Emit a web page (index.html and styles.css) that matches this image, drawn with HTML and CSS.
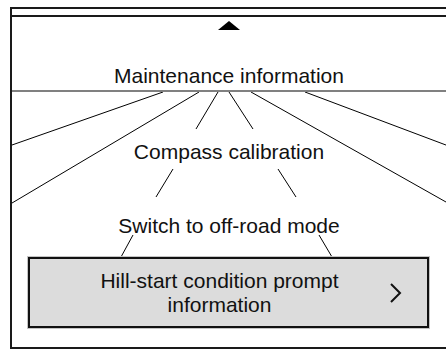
FILE: index.html
```html
<!DOCTYPE html>
<html lang="en">
<head>
<meta charset="utf-8">
<title>Menu</title>
<link rel="stylesheet" href="styles.css">
</head>
<body>
<div class="frame">
  <div class="strip"></div>
  <div class="header">
    <svg class="up-arrow" width="22" height="9" viewBox="0 0 22 9"><polygon points="11,0 22,9 0,9" fill="#000"/></svg>
    <div class="item title">Maintenance information</div>
  </div>
  <div class="tree">
    <svg class="links" width="434" height="165" viewBox="0 0 434 165">
      <g stroke="#000" stroke-width="1" fill="none">
        <line x1="151" y1="0" x2="-4" y2="54.4"/>
        <line x1="187" y1="0" x2="-4" y2="113.4"/>
        <line x1="206" y1="0" x2="184" y2="37"/>
        <line x1="217" y1="0" x2="241" y2="37"/>
        <line x1="239" y1="0" x2="440" y2="113.4"/>
        <line x1="293" y1="0" x2="440" y2="55.3"/>
        <line x1="161" y1="77" x2="144" y2="105"/>
        <line x1="266" y1="77" x2="284" y2="105"/>
        <line x1="121" y1="143" x2="109" y2="165"/>
        <line x1="307" y1="143" x2="320" y2="165"/>
      </g>
    </svg>
    <div class="item compass">Compass calibration</div>
    <div class="item offroad">Switch to off-road mode</div>
    <div class="selected">
      <div class="selected-text">Hill-start condition prompt<br>information</div>
      <svg class="chevron" width="12" height="20" viewBox="0 0 12 20"><polyline points="1,1 10,10 1,19" fill="none" stroke="#111" stroke-width="2"/></svg>
    </div>
  </div>
</div>
</body>
</html>
```

FILE: styles.css
```css
html, body {
  margin: 0;
  padding: 0;
  background: #fff;
  overflow: hidden;
}
body {
  width: 446px;
  height: 352px;
  font-family: "Liberation Sans", Arial, sans-serif;
  color: #111;
}
.frame {
  margin: 7px 0 0 10px;
  height: 338px;
  border: 2px solid #1a1a1a;
  border-right: 0;
  display: flex;
  flex-direction: column;
}
.strip {
  height: 6px;
  border-bottom: 2px solid #1a1a1a;
  flex: none;
}
.header {
  height: 73px;
  border-bottom: 2px solid #808080;
  display: flex;
  flex-direction: column;
  align-items: center;
  flex: none;
}
.up-arrow {
  display: block;
  margin-top: 4px;
}
.item {
  font-size: 21px;
  line-height: 24px;
  text-align: center;
  white-space: nowrap;
}
.title {
  margin-top: 34px;
}
.tree {
  position: relative;
  flex: 1;
  display: flex;
  flex-direction: column;
  align-items: center;
  overflow: hidden;
}
.links {
  position: absolute;
  left: 0;
  top: 0;
}
.compass {
  margin-top: 48px;
  position: relative;
}
.offroad {
  margin-top: 50px;
  position: relative;
}
.selected {
  position: relative;
  margin-top: 19px;
  width: 397px;
  height: 67px;
  border: 2px solid #111;
  background: #dcdcdc;
  box-shadow: 0 0 0 1px #c4c4c4;
  display: flex;
  align-items: center;
  justify-content: center;
  align-self: flex-start;
  margin-left: 16px;
}
.selected-text {
  font-size: 21px;
  line-height: 24px;
  text-align: center;
  padding-right: 18px;
  flex: 1;
}
.chevron {
  position: absolute;
  left: 360px;
  top: 24px;
}
```
